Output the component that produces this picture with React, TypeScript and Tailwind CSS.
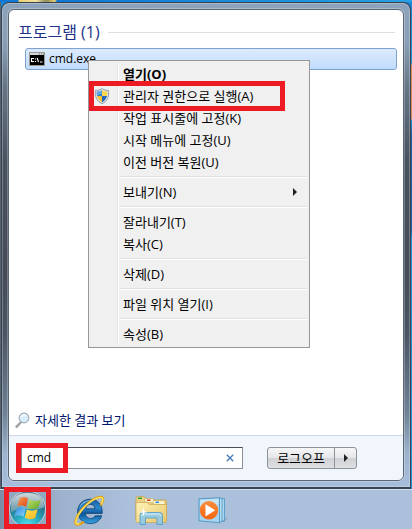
import React, { useState } from 'react';

interface MenuEntry {
  label: string;
  bold?: boolean;
  shield?: boolean;
  submenu?: boolean;
}

const menuGroups: MenuEntry[][] = [
  [
    { label: '열기(O)', bold: true },
    { label: '관리자 권한으로 실행(A)', shield: true },
    { label: '작업 표시줄에 고정(K)' },
    { label: '시작 메뉴에 고정(U)' },
    { label: '이전 버전 복원(U)' },
  ],
  [{ label: '보내기(N)', submenu: true }],
  [{ label: '잘라내기(T)' }, { label: '복사(C)' }],
  [{ label: '삭제(D)' }],
  [{ label: '파일 위치 열기(I)' }],
  [{ label: '속성(B)' }],
];

const ShieldIcon = () => (
  <svg className="w-4 h-4" viewBox="0 0 16 16">
    <defs>
      <clipPath id="shield">
        <path d="M8 2.2C6.4 3.3 4.6 3.7 2.8 3.6C2.4 8.6 3.8 12 8 14.2C12.2 12 13.6 8.6 13.2 3.6C11.4 3.7 9.6 3.3 8 2.2Z" />
      </clipPath>
    </defs>
    <path d="M8 .5C6.2 2 3.8 2.6 1.6 2.3C.6 8.6 2.6 13.4 8 15.6C13.4 13.4 15.4 8.6 14.4 2.3C12.2 2.6 9.8 2 8 .5Z" fill="#dfe3e6" stroke="#8b9299" strokeWidth=".9" />
    <g clipPath="url(#shield)">
      <path d="M0 0H8V8H0Z" fill="#2d7fd0" />
      <path d="M8 0H16V8H8Z" fill="#fbd54a" />
      <path d="M0 8H8V16H0Z" fill="#f6c531" />
      <path d="M8 8H16V16H8Z" fill="#2467bd" />
      <path d="M3 3L8 2V6C6 6 4 7 3 8Z" fill="#7db9ea" opacity=".6" />
    </g>
  </svg>
);

const CmdIcon = () => (
  <svg className="w-4 h-4" viewBox="0 0 16 16">
    <path d="M.5 1.5H15.5V14.5H.5Z" fill="#000" stroke="#9a9a9a" />
    <path d="M1 2H15V4H1Z" fill="#d4d6d8" />
    <path d="M10 2.5H11V3.5H10ZM12 2.5H13V3.5H12ZM14 2.5H15V3.5H14Z" fill="#666" />
    <path d="M5 7.5H2.5V10.5H5M6.5 7.5V8.5M6.5 10V11M8.2 7L9.5 11M11 11H13.5" fill="none" stroke="#fff" strokeWidth="1.1" />
  </svg>
);

const MagnifierIcon = () => (
  <svg className="w-4 h-4" viewBox="0 0 16 16">
    <path d="M6 10L1.6 14.6" stroke="#8b9096" strokeWidth="2.4" strokeLinecap="round" />
    <path d="M5.6 9.8L1.6 14" stroke="#cdd1d5" strokeWidth=".9" strokeLinecap="round" />
    <circle cx="9" cy="6" r="4.9" fill="#d8ecfa" stroke="#a3abb3" strokeWidth="1.1" />
    <path d="M5.5 5.8C5.5 2 10 1.2 12 3.8C10 4 7 4.2 5.5 5.8Z" fill="#f8fcff" />
  </svg>
);

const StartOrb = () => (
  <svg className="w-[37px] h-8" viewBox="0 0 37 32">
    <defs>
      <radialGradient id="orb" cx=".5" cy="1" r=".9">
        <stop offset="0" stopColor="#5feaf4" />
        <stop offset=".4" stopColor="#27a9be" />
        <stop offset=".75" stopColor="#2c7790" />
        <stop offset="1" stopColor="#5b7f93" />
      </radialGradient>
      <linearGradient id="gloss" x1="0" y1="0" x2="0" y2="1">
        <stop offset="0" stopColor="#dbe4e6" stopOpacity=".9" />
        <stop offset="1" stopColor="#a4bcc4" stopOpacity=".5" />
      </linearGradient>
      <linearGradient id="flagRed" x1="0" y1="0" x2="1" y2="1">
        <stop offset="0" stopColor="#f9a35c" />
        <stop offset="1" stopColor="#dd4312" />
      </linearGradient>
      <linearGradient id="flagGreen" x1="0" y1="0" x2="1" y2="1">
        <stop offset="0" stopColor="#c2df6a" />
        <stop offset="1" stopColor="#5fa527" />
      </linearGradient>
      <linearGradient id="flagBlue" x1="0" y1="0" x2="1" y2="1">
        <stop offset="0" stopColor="#2c8be0" />
        <stop offset="1" stopColor="#8ed4fa" />
      </linearGradient>
      <linearGradient id="flagYellow" x1="0" y1="0" x2="1" y2="1">
        <stop offset="0" stopColor="#ffe04d" />
        <stop offset="1" stopColor="#fab522" />
      </linearGradient>
    </defs>
    <path d="M0 0H37V32H0Z" fill="#8fa9c0" />
    <circle cx="18.5" cy="17" r="18" fill="url(#orb)" stroke="#d6e3ea" strokeWidth=".8" />
    <path d="M2 15C2 5 9 1 18.5 1S35 5 35 15C26 20 11 14 2 20Z" fill="url(#gloss)" />
    <path d="M10.6 6.2C13.5 4.4 16.5 4.6 19 6.4L17 14.8C14.2 13 11.4 13 8.2 14.6Z" fill="url(#flagRed)" />
    <path d="M20.4 7.2C23.8 9.2 27.4 9.8 32 7.6L29 15.8C25.4 17.6 21.6 17.4 18.4 15.4Z" fill="url(#flagGreen)" />
    <path d="M7.8 16.2C11 14.6 13.8 14.6 16.6 16.4L14.6 24.6C11.8 22.8 8.8 22.8 5.4 24.4Z" fill="url(#flagBlue)" />
    <path d="M18 17.2C21.2 19.2 24.8 19 28.6 17.2L26.2 26C22.4 27.8 19 27.6 15.8 25.4Z" fill="url(#flagYellow)" />
  </svg>
);

const ExplorerIcon = () => (
  <svg className="w-8 h-8" viewBox="0 0 32 32">
    <defs>
      <linearGradient id="ieBlue" x1="0" y1="0" x2="0" y2="1">
        <stop offset="0" stopColor="#1b5aa0" />
        <stop offset=".35" stopColor="#2b86cc" />
        <stop offset=".6" stopColor="#0c5599" />
        <stop offset="1" stopColor="#35a7e8" />
      </linearGradient>
    </defs>
    <path
      d="M29.2 19.4H12.4C12.6 22.6 14.8 24.4 17.6 24.4C19.8 24.4 21.4 23.4 22.2 21.8H28.8C27.2 26.6 23 29.6 17.4 29.6C10.2 29.6 4.6 24.6 4.6 17.6C4.6 10.4 10.2 5.2 17.2 5.2C24.8 5.2 29.8 10.8 29.2 19.4ZM12.6 14.8H22C21.8 12 19.8 10.4 17.4 10.4C14.8 10.4 12.9 12.2 12.6 14.8Z"
      fill="url(#ieBlue)"
      stroke="#12406f"
      strokeWidth=".8"
    />
    <path d="M6.5 14C8 8 14 5.4 19 6.6C14 7 9.5 9.4 6.5 14Z" fill="#a5d7f5" opacity=".75" />
    <path
      d="M28 10.5C31.5 5 30.5 2.2 26 3.2C19.5 4.6 10.5 12 5.4 20.4C1.2 27.4 1.4 31.8 6 30.4C7.6 29.9 9 29.1 10.2 28.2"
      fill="none"
      stroke="#e0a21a"
      strokeWidth="2.4"
      strokeLinecap="round"
    />
    <path
      d="M28.4 9.6C31 5 30 2.8 26 3.6C19.5 5 10.5 12.4 5.6 20.6C1.8 27.2 2 30.9 6 29.9"
      fill="none"
      stroke="#ffdf55"
      strokeWidth="1.4"
      strokeLinecap="round"
    />
  </svg>
);

const FolderIcon = () => (
  <svg className="w-8 h-8" viewBox="0 0 32 32">
    <defs>
      <linearGradient id="folder" x1="0" y1="0" x2="1" y2="1">
        <stop offset="0" stopColor="#fdf2b9" />
        <stop offset="1" stopColor="#e9c768" />
      </linearGradient>
    </defs>
    <path d="M1 26V4.5Q1 2.5 3 2.5H8.5Q10 2.5 10.5 4.5L11.5 6H30.5Q31.5 6 31.5 7.5V26Z" fill="#ecd182" stroke="#c7a24a" strokeWidth=".7" />
    <path d="M3 3.5H7V5H3Z" fill="#2ba444" />
    <path d="M9.5 8V6Q9.5 4.5 11 4.5H17Q18.5 4.5 19 6.5V9Z" fill="#fdf5cf" stroke="#c7a24a" strokeWidth=".6" />
    <path d="M12 5.5H15.5V7H12Z" fill="#d93a22" />
    <path d="M18 10V8Q18 6.5 19.5 6.5H28Q30 6.5 30 9V11Z" fill="#fdf5cf" stroke="#c7a24a" strokeWidth=".6" />
    <path d="M20.5 7.5H24V9H20.5Z" fill="#2b8fe3" />
    <path d="M1 8.5H12L14 10.5H31.5V27Q31.5 28.5 30 28.5H2.5Q1 28.5 1 27Z" fill="url(#folder)" stroke="#cba650" strokeWidth=".7" />
    <path d="M5 30.5V21.5Q5 18.5 8 18.5H24.5Q27.5 18.5 27.5 21.5V30.5H22V24H10.5V30.5Z" fill="#8fc9e8" fillOpacity=".9" stroke="#5b9ec6" strokeWidth=".9" />
    <path d="M6.5 22Q6.5 20 8.5 20H24Q26 20 26 22" fill="none" stroke="#d8f0fb" />
    <path d="M8.5 13.5L9.3 17.2L13 18L9.3 18.8L8.5 22.5L7.7 18.8L4 18L7.7 17.2Z" fill="#fff" />
  </svg>
);

const MediaPlayerIcon = () => (
  <svg className="w-8 h-8" viewBox="0 0 32 32">
    <defs>
      <linearGradient id="play" x1="0" y1="0" x2="0" y2="1">
        <stop offset="0" stopColor="#fb8d3c" />
        <stop offset="1" stopColor="#f26410" />
      </linearGradient>
    </defs>
    <path d="M18 26L31 23.5L27 28H18Z" fill="#7c90aa" opacity=".5" />
    <path d="M20 5.5L27.5 4.5V27L20 26Z" fill="#a9d6f0" stroke="#4b94c3" strokeWidth=".8" />
    <path d="M18 5L25 4V28L18 27Z" fill="#b6dff4" stroke="#4b94c3" strokeWidth=".8" />
    <path d="M2 4.8L22.5 3.8V28.8L2 26.8Z" fill="#a6d3ef" stroke="#4b94c3" strokeWidth=".9" />
    <path d="M3 5.8L21.5 4.8V10L3 15Z" fill="#d4edfa" opacity=".7" />
    <circle cx="12" cy="16.2" r="9.2" fill="url(#play)" />
    <path d="M8.5 10.2L18.2 16.2L8.5 22.4Z" fill="#fff" />
  </svg>
);

const Arrow = () => (
  <svg className="w-1 h-2" viewBox="0 0 4 8">
    <path d="M0 0L4 4L0 8Z" fill="#222" />
  </svg>
);

const ContextMenu = () => (
  <div
    role="menu"
    className="absolute top-3 left-[63px] z-10 w-[222px] border border-[#979797] bg-[#f0f0f0] p-[2px]"
  >
    <div className="absolute inset-y-[2px] left-7 w-[2px] border-l border-[#e2e3e3] bg-white" />
    {menuGroups.map((group, index) => (
      <div key={group[0].label}>
        {index > 0 && (
          <div className="ml-[28px] flex h-2 items-center">
            <div className="h-[2px] w-full border-t border-[#e0e0e0] bg-white" />
          </div>
        )}
        {group.map((item) => (
          <button
            key={item.label}
            role="menuitem"
            className="relative flex h-[22px] w-full items-center text-left hover:bg-[#e3edf9]"
          >
            <span className="flex w-8 shrink-0 items-center pl-[3px]">{item.shield && <ShieldIcon />}</span>
            <span className={item.bold ? 'flex-1 font-bold' : 'flex-1'}>{item.label}</span>
            {item.submenu && (
              <span className="pr-[10px]">
                <Arrow />
              </span>
            )}
            {item.shield && (
              <span className="pointer-events-none absolute -inset-y-1 -left-[2px] right-[22px] border-5 border-[#ed1c24]" />
            )}
          </button>
        ))}
      </div>
    ))}
  </div>
);

export default function App() {
  const [query, setQuery] = useState('cmd');

  return (
    <div className="flex min-h-screen flex-col bg-[#1c95dd] font-['Open_Sans','Noto_Sans_CJK_KR',sans-serif] text-[13px] leading-5 text-black">
      <div className="h-[2px] bg-[linear-gradient(90deg,#0f78d4_0,#0f78d4_18px,#e9cf6e_19px,#f3e3a0_36px,#8f8a5c_46px,#e9cf6e_55px,#0f78d4_57px,#1d93dc_300px,#2aa0e2_100%)]" />
      <div className="flex flex-1 flex-col bg-[linear-gradient(90deg,#566474_1px,transparent_1px),linear-gradient(180deg,#1787d6_0,#1c95dd_60px,#d98a5c_64px,#d98a5c_116px,#1c95dd_119px,#1562a8_134px,#1562a8_228px,#1c95dd_236px)] px-px">
        <main className="flex flex-1 flex-col rounded-t-lg border border-b-2 border-[#39424f] bg-[linear-gradient(180deg,#8da3bb_0,#8a9fb6_40px,#657585_85px,#49525f_160px,#444c58_270px,#4b5563_330px,#6f8296_410px,#9bb3cd_450px,#a6bedb_100%)] p-[6px] shadow-[inset_0_0_0_1px_#ffffff40]">
          <div className="flex flex-1 flex-col rounded-md border border-[#5a6674] bg-white shadow-[0_0_0_1px_#ffffff40]">
            <section className="flex flex-1 flex-col pt-3">
              <div className="flex items-center gap-2 pr-2 pl-[9px]">
                <h2 className="text-base leading-5 text-[#1e3287]">프로그램 (1)</h2>
                <div className="h-px flex-1 bg-[#dfdfdf]" />
              </div>
              <div className="relative mt-[6px] mr-[6px] ml-4">
                <button className="flex h-[22px] w-full items-center gap-1 rounded-[3px] border border-[#7da2ce] bg-linear-to-b from-[#dcebfc] to-[#c1dcfc] pl-[3px] text-xs">
                  <CmdIcon />
                  cmd.exe
                </button>
                <ContextMenu />
              </div>
              <a href="#results" className="mt-auto mb-[5px] ml-[6px] flex items-center gap-1 text-[#00156e]">
                <MagnifierIcon />
                자세한 결과 보기
              </a>
            </section>

            <footer className="flex items-center gap-6 rounded-b-md border-t border-[#cdd7e8] bg-[#f1f5fc] py-[11px] pr-[46px] pl-3">
              <div className="relative flex h-[22px] flex-1 items-center border border-[#8c9096] border-t-[#4a4d52] bg-white">
                <input
                  aria-label="검색"
                  value={query}
                  onChange={(e) => setQuery(e.target.value)}
                  className="w-full min-w-0 flex-1 bg-transparent pl-[5px] text-xs outline-none"
                />
                <button aria-label="지우기" onClick={() => setQuery('')} className="px-2">
                  <svg className="w-2 h-2" viewBox="0 0 8 8">
                    <path d="M.8 .8L7.2 7.2M7.2 .8L.8 7.2" stroke="#4a7ebb" strokeWidth="1.4" />
                  </svg>
                </button>
                <span className="pointer-events-none absolute -inset-y-[5px] -left-[6px] w-[52px] border-5 border-[#ed1c24]" />
              </div>
              <div className="flex h-[22px] rounded-[3px] border border-[#8e9299] bg-[linear-gradient(180deg,#f6f6f8_0,#e6e7ea_48%,#cfd1d5_52%,#dfe0e4_100%)]">
                <button className="flex items-center px-[9px]">로그오프</button>
                <button aria-label="종료 옵션" className="flex w-[22px] items-center justify-center border-l border-[#8e9299]">
                  <Arrow />
                </button>
              </div>
            </footer>
          </div>
        </main>
      </div>

      <nav className="flex h-10 items-end border-t border-[#d3e0ee] bg-[linear-gradient(90deg,#7c8ea5_0,#9db2cc_60px,#abc0da_130px,#abc0da_100%)] pl-1">
        <button aria-label="시작" className="shrink-0 border-5 border-[#ed1c24]">
          <StartOrb />
        </button>
        <div className="flex items-center gap-[30px] self-center pl-[22px]">
          <button aria-label="Internet Explorer">
            <ExplorerIcon />
          </button>
          <button aria-label="Windows 탐색기">
            <FolderIcon />
          </button>
          <button aria-label="Windows Media Player">
            <MediaPlayerIcon />
          </button>
        </div>
      </nav>
    </div>
  );
}
